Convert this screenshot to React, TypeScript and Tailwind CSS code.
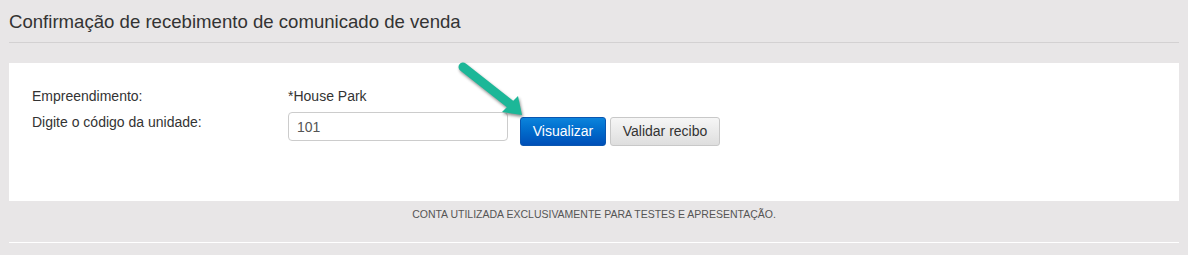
import React from "react";

export default function App() {
  return (
    <div className="relative w-[1188px] h-[255px] bg-[#e8e6e7] px-[9px] font-['Liberation_Sans',Arial,sans-serif] text-[#333]">
      <div className="pt-3 pb-[10px] border-b border-[#d3d1d2]">
        <h1 className="text-[18.6px] leading-[20px] text-[#333]">
          Confirmação de recebimento de comunicado de venda
        </h1>
      </div>
      <div className="mt-5 h-[138px] bg-white pt-[23px] pl-[23px] text-[14px]">
        <div className="flex leading-[20px]">
          <div className="w-[256px]">Empreendimento:</div>
          <div>*House Park</div>
        </div>
        <div className="flex items-start mt-[6px]">
          <div className="w-[256px] leading-[20px]">Digite o código da unidade:</div>
          <input
            readOnly
            value="101"
            className="w-[220px] h-[29px] border border-[#ccc] rounded-[4px] px-2 text-[14px] text-[#555] outline-none"
          />
          <button className="ml-3 mt-[5px] h-[29px] w-[86px] rounded-[3px] border border-[#0a56b0] bg-linear-to-b from-[#0c84dc] to-[#004fb8] text-white text-[14px]">
            Visualizar
          </button>
          <button className="ml-1 mt-[5px] h-[29px] w-[110px] rounded-[3px] border border-[#c8c8c8] bg-linear-to-b from-[#f6f6f6] to-[#dedede] text-[#333] text-[14px]">
            Validar recibo
          </button>
        </div>
      </div>
      <div className="mt-[6px] text-center text-[10.5px] leading-[14px] text-[#555]">
        CONTA UTILIZADA EXCLUSIVAMENTE PARA TESTES E APRESENTAÇÃO.
      </div>
      <div className="mt-[21px] h-px bg-white" />
      <svg
        className="absolute left-[455px] top-[58px] drop-shadow-[1px_2px_1.5px_rgba(0,0,0,0.45)]"
        width="80"
        height="65"
        viewBox="0 0 80 65"
      >
        <line x1="8" y1="9" x2="55" y2="46" stroke="#1cb798" strokeWidth="9" strokeLinecap="round" />
        <polygon points="67,57 47,54 63,38" fill="#1cb798" />
      </svg>
    </div>
  );
}
